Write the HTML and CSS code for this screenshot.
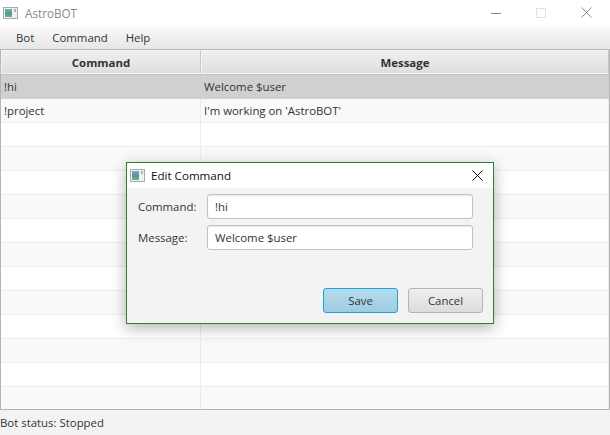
FILE: index.html
```html
<!DOCTYPE html>
<html lang="en">

<head>
    <meta charset="UTF-8">
    <meta name="viewport" content="width=device-width, initial-scale=1.0">
    <title>AstroBOT</title>
    <link rel="stylesheet" href="styles.css">
</head>

<body>
    <svg class="defs" width="0" height="0">
        <defs>
            <linearGradient id="icon-fill" x1="0" y1="0" x2="0" y2="1">
                <stop offset="0" stop-color="#7fa6c4" />
                <stop offset="0.55" stop-color="#4f9a8c" />
                <stop offset="1" stop-color="#6fb58a" />
            </linearGradient>
        </defs>
    </svg>

    <div class="titlebar">
        <svg class="app-icon" width="15" height="12" viewBox="0 0 15 12">
            <rect x="0.5" y="0.5" width="14" height="11" fill="#f0f2f2" stroke="#a6abad" />
            <rect x="2" y="2" width="7" height="8" fill="url(#icon-fill)" />
            <rect x="11" y="2" width="2" height="3" fill="#aab0b3" />
        </svg>
        <span class="app-title">AstroBOT</span>
        <div class="win-buttons">
            <svg width="10" height="10" viewBox="0 0 10 10"><path d="M0 5.5H10" stroke="#8c8c8c" /></svg>
            <svg width="10" height="10" viewBox="0 0 10 10"><rect x="0.5" y="0.5" width="9" height="9" fill="none" stroke="#e0e0e0" /></svg>
            <svg width="11" height="11" viewBox="0 0 11 11"><path d="M0.5 0.5L10.5 10.5M10.5 0.5L0.5 10.5" stroke="#8c8c8c" /></svg>
        </div>
    </div>

    <div class="menubar">
        <span>Bot</span>
        <span>Command</span>
        <span>Help</span>
    </div>

    <div class="table">
        <div class="table-head">
            <div class="head-cell col-command">Command</div>
            <div class="head-cell col-message">Message</div>
        </div>
        <div class="row selected"><div class="cell col-command">!hi</div><div class="cell col-message">Welcome $user</div></div>
        <div class="row"><div class="cell col-command">!project</div><div class="cell col-message">I'm working on 'AstroBOT'</div></div>
        <div class="row"><div class="cell col-command"></div><div class="cell col-message"></div></div>
        <div class="row"><div class="cell col-command"></div><div class="cell col-message"></div></div>
        <div class="row"><div class="cell col-command"></div><div class="cell col-message"></div></div>
        <div class="row"><div class="cell col-command"></div><div class="cell col-message"></div></div>
        <div class="row"><div class="cell col-command"></div><div class="cell col-message"></div></div>
        <div class="row"><div class="cell col-command"></div><div class="cell col-message"></div></div>
        <div class="row"><div class="cell col-command"></div><div class="cell col-message"></div></div>
        <div class="row"><div class="cell col-command"></div><div class="cell col-message"></div></div>
        <div class="row"><div class="cell col-command"></div><div class="cell col-message"></div></div>
        <div class="row"><div class="cell col-command"></div><div class="cell col-message"></div></div>
        <div class="row"><div class="cell col-command"></div><div class="cell col-message"></div></div>
        <div class="row"><div class="cell col-command"></div><div class="cell col-message"></div></div>
    </div>

    <div class="statusbar">Bot status: Stopped</div>

    <div class="dialog">
        <div class="dialog-title">
            <svg class="app-icon" width="15" height="13" viewBox="0 0 15 13">
                <rect x="0.5" y="0.5" width="14" height="12" fill="#f0f2f2" stroke="#a6abad" />
                <rect x="2" y="2" width="7" height="9" fill="url(#icon-fill)" />
                <rect x="11" y="2" width="2" height="3" fill="#aab0b3" />
            </svg>
            <span>Edit Command</span>
            <svg class="dialog-close" width="11" height="11" viewBox="0 0 11 11"><path d="M0.5 0.5L10.5 10.5M10.5 0.5L0.5 10.5" stroke="#111" /></svg>
        </div>
        <div class="dialog-body">
            <div class="field">
                <label>Command:</label>
                <div class="text-input">!hi</div>
            </div>
            <div class="field">
                <label>Message:</label>
                <div class="text-input">Welcome $user</div>
            </div>
            <div class="dialog-buttons">
                <button class="btn btn-default">Save</button>
                <button class="btn">Cancel</button>
            </div>
        </div>
    </div>
</body>

</html>
```
FILE: styles.css
```css
* {
    box-sizing: border-box;
}

body {
    margin: 0;
    width: 610px;
    height: 435px;
    overflow: hidden;
    position: relative;
    display: flex;
    flex-direction: column;
    background: #f3f3f3;
    font-family: "Open Sans", "Noto Sans", Arial, sans-serif;
    font-size: 11.4px;
    color: #333;
}

.defs {
    position: absolute;
}

.titlebar {
    height: 26px;
    display: flex;
    align-items: center;
    padding: 0 0 1px 3px;
    background: #fff;
}

.app-icon {
    flex: none;
}

.app-title {
    margin-left: 7px;
    font-size: 11.7px;
    color: #8a8a8a;
}

.win-buttons {
    margin-left: auto;
    display: flex;
    align-items: center;
    gap: 35px;
    padding-right: 18px;
}

.menubar {
    height: 24px;
    display: flex;
    align-items: center;
    gap: 18px;
    padding-left: 16px;
    background: linear-gradient(#fafafa, #e6e6e6);
    border-bottom: 1px solid #b5b5b5;
}

.table {
    height: 360px;
    overflow: hidden;
    border: 1px solid #b5b5b5;
    border-top: 0;
    background: #fff;
}

.table-head {
    display: flex;
    height: 25px;
    border-bottom: 1px solid #c4c4c4;
}

.head-cell {
    display: flex;
    align-items: center;
    justify-content: center;
    padding-top: 1px;
    font-weight: 700;
    background: linear-gradient(#f0f0f0, #dedede);
    border: 1px solid #f5f5f5;
    border-right-color: #c8c8c8;
}

.col-command {
    width: 200px;
    flex: none;
}

.col-message {
    flex: 1;
}

.row {
    display: flex;
    height: 24px;
    background: #fff;
}

.row:nth-child(odd) {
    background: #f9f9f9;
}

.row.selected {
    background: #d0d0d0;
}

.cell {
    display: flex;
    align-items: center;
    padding-left: 3px;
    border-bottom: 1px solid #ececec;
    border-right: 1px solid #ececec;
}

.row.selected .cell {
    border-color: #d0d0d0;
}

.statusbar {
    flex: 1;
    display: flex;
    align-items: center;
    background: #f3f3f3;
}

.dialog {
    position: absolute;
    left: 126px;
    top: 162px;
    width: 368px;
    height: 162px;
    display: flex;
    flex-direction: column;
    background: #f3f3f3;
    border: 1px solid #2f7d32;
    box-shadow: 0 4px 14px rgba(0, 0, 0, 0.3);
}

.dialog-title {
    height: 25px;
    display: flex;
    align-items: center;
    gap: 6px;
    padding: 0 10px 1px 3px;
    font-size: 11.6px;
    background: #fff;
    color: #111;
}

.dialog-close {
    margin-left: auto;
}

.dialog-body {
    flex: 1;
    display: flex;
    flex-direction: column;
    gap: 6px;
    padding: 6px 10px 10px 11px;
}

.field {
    display: flex;
    align-items: center;
}

.field label {
    width: 69px;
    flex: none;
}

.text-input {
    width: 266px;
    height: 25px;
    display: flex;
    align-items: center;
    padding-left: 7px;
    background: #fff;
    border: 1px solid #c2c2c2;
    border-radius: 3px;
    box-shadow: inset 0 1px 1px #e8e8e8;
}

.dialog-buttons {
    margin-top: auto;
    display: flex;
    justify-content: flex-end;
    gap: 10px;
}

.btn {
    width: 75px;
    height: 25px;
    padding: 0;
    font: inherit;
    color: #333;
    background: linear-gradient(#efefef, #dcdcdc);
    border: 1px solid #b4b4b4;
    border-radius: 3px;
}

.btn-default {
    background: linear-gradient(#b6dcee, #9fcbe0);
    border-color: #1fa0dc;
}
```
